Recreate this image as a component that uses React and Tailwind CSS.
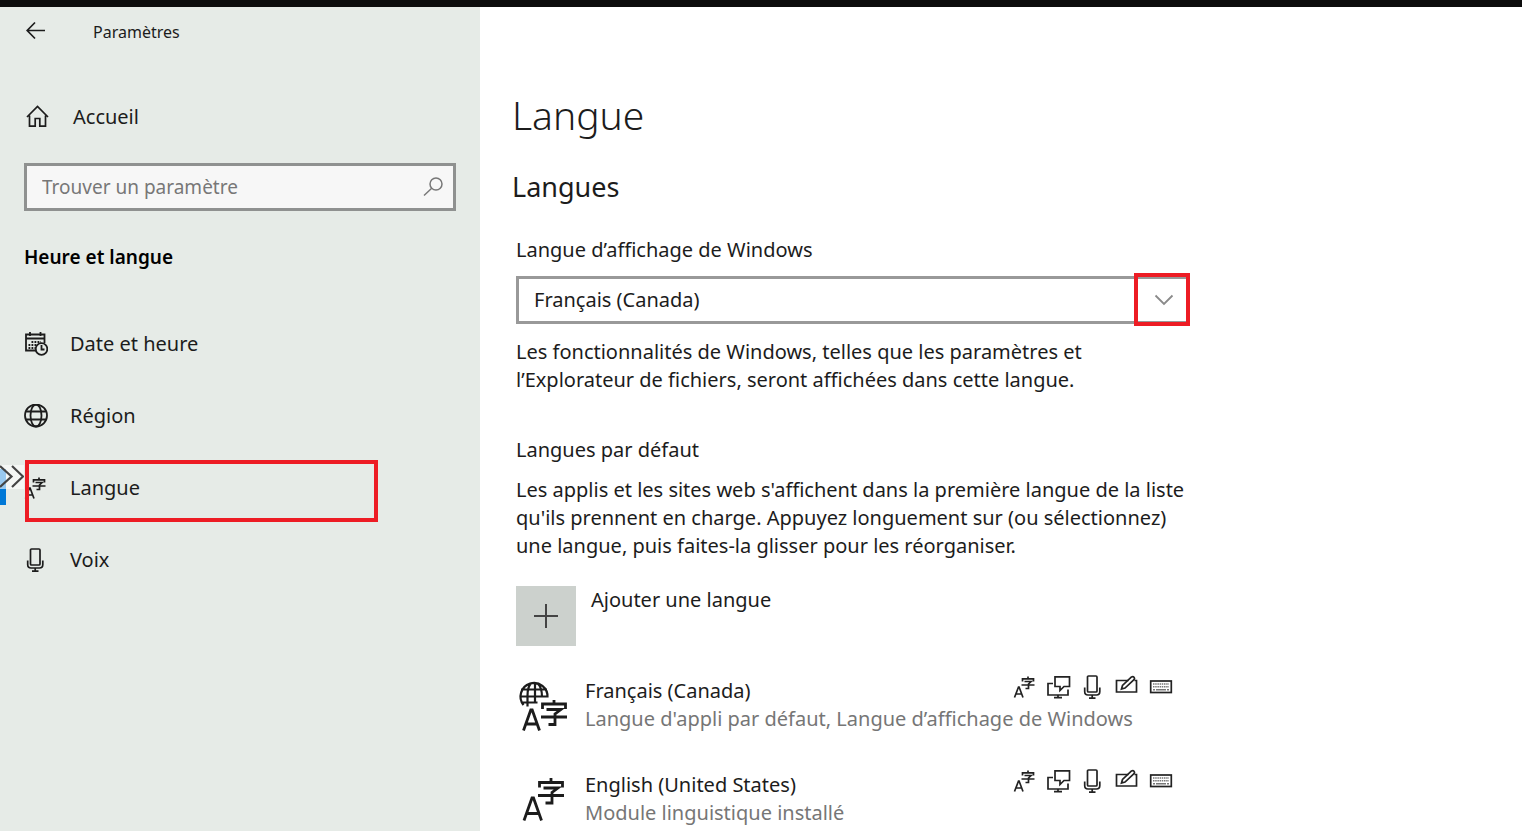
import React from "react";

function Svg({ size = 24, className = "", sw = 1.5, children }) {
  return (
    <svg
      aria-hidden="true"
      width={size}
      height={size}
      viewBox={`0 0 ${size} ${size}`}
      fill="none"
      stroke="currentColor"
      strokeWidth={sw}
      className={`shrink-0 ${className}`}
    >
      {children}
    </svg>
  );
}

const BackIcon = () => (
  <Svg sw={1.7}>
    <path d="M21 10.500H3.500M11 2.500L3.200 10.500l7.800 8" />
  </Svg>
);

const HomeIcon = () => (
  <Svg sw={1.7}>
    <path d="M2 12L12.500 1.500L23 12M4.500 10.500V21.200H10.200V13.500H14.800V21.200H20.500V10.500" />
  </Svg>
);

const SearchIcon = () => (
  <Svg sw={1.5}>
    <circle cx="15" cy="9" r="6" />
    <path d="M10.700 13.300L3 20.500" />
  </Svg>
);

const CalendarIcon = () => (
  <Svg sw={1.8}>
    <path d="M12.500 18.500H2V2.500H20.500V11M2 6.500H20.500M6 0V4M16.500 0V4" />
    <path d="M7.500 10H17M4.500 13H13M4.500 16H12" strokeDasharray="1.800 1.200" />
    <circle cx="17.500" cy="17" r="5.800" />
    <path d="M17.500 13V17.500H20.500" />
  </Svg>
);

const GlobeIcon = () => (
  <Svg sw={1.8}>
    <circle cx="12" cy="11.500" r="11" />
    <ellipse cx="12" cy="11.500" rx="5.500" ry="11" />
    <path d="M2 7.500H22M2 15.500H22" />
  </Svg>
);

const TranslateIcon = () => (
  <Svg sw={1.7}>
    <path d="M1.500 22.500L5.500 12h.6L10 22.500M3 19H8.500" />
    <path d="M9.500 6.500V3.800H20.500V6.500M15 1.500V3.800M11.500 6.500H18L15.500 9V13.500H12.500M8.500 10H21.500" />
  </Svg>
);

const MicIcon = () => (
  <Svg sw={1.7}>
    <rect x="6.500" y="1" width="9.500" height="16" rx="1" />
    <path d="M3.700 12.500V16.500Q3.700 20 7 20H15.500Q18.800 20 18.800 16.500V12.500M11.200 20V23M8 23.200H14.500" />
  </Svg>
);

const DisplayIcon = () => (
  <Svg sw={1.7}>
    <path d="M6 8.500H1V20H21V14.500M11 20V22.500M7 22.700H15" />
    <path d="M8 1.800H22.500V11.500H17L13 15.500V11.500H8Z" />
  </Svg>
);

const PenIcon = () => (
  <Svg sw={1.7}>
    <path d="M13.500 5.500H1.500V17H21.500V5.500H19.500" />
    <path d="M6.500 14L7.500 10.500L16.500 2Q18 1 19 2.200Q20 3.500 19 4.700L10 13Z" />
  </Svg>
);

const KeyboardIcon = () => (
  <Svg sw={1.7}>
    <rect x="1.700" y="6" width="20.600" height="11.500" />
    <g stroke="#777">
      <path d="M4 9H20M4 11.800H20" strokeWidth="1.500" strokeDasharray="1.500 .7" />
      <path d="M4 14.700H6M7 14.700H17M18 14.700H20" strokeWidth="1.600" />
    </g>
  </Svg>
);

const BigTranslateIcon = () => (
  <Svg size={56} sw={2.8}>
    <path d="M8 49.500L16 27h1.500L25.500 49.500M11 42.500H22.500" />
    <path d="M23.500 16.500V11.500H46.500V16.500M35 7V11.500M27.500 17H42L36 21.500V32H29.500M22 24.500H48" />
  </Svg>
);

const GlobeTranslateIcon = () => (
  <Svg size={56} sw={2.8}>
    <path d="M7.500 28A13.500 13.500 0 1 1 31.500 20.500M5 12.500H31M5 19.500H31M6 25.500H21.500M11.500 29.500V19Q11.500 9 15.500 6M19 6V26M26 20Q26 10 21.500 6.500" strokeWidth="2.200" />
    <path d="M7.500 53.500L14.800 33h1.400L23.500 53.500M10.500 47H20.500" />
    <path d="M26.500 32V27H49.500V32M38 23V27M30.500 32.500H45L39 37V47.500H32.500M25 40H51" />
  </Svg>
);

const navItems = [
  { label: "Date et heure", Icon: CalendarIcon },
  { label: "Région", Icon: GlobeIcon },
  { label: "Langue", Icon: TranslateIcon, current: true },
  { label: "Voix", Icon: MicIcon },
];

const languages = [
  {
    name: "Français (Canada)",
    detail: "Langue d'appli par défaut, Langue d’affichage de Windows",
    Icon: GlobeTranslateIcon,
  },
  {
    name: "English (United States)",
    detail: "Module linguistique installé",
    Icon: BigTranslateIcon,
  },
];

function NavItem({ label, Icon, current }) {
  return (
    <li className="relative">
      <a
        href="#"
        aria-current={current ? "page" : undefined}
        className="flex h-[72px] items-center gap-[22px] pl-6"
      >
        <Icon />
        {label}
      </a>
      {current && (
        <>
          <span className="absolute left-0 top-[17px] h-9 w-1.5 bg-[#0078d7]" />
          <span className="absolute left-0 top-[13px] h-6 w-6 bg-white/60">
            <svg aria-hidden="true" width="24" height="24" viewBox="0 0 24 24" fill="none" stroke="#444" strokeWidth="2.200">
              <path d="M0 1L11.500 11.500L0 22M12 1L23 11.500L12 22" />
            </svg>
          </span>
          <span className="absolute left-[25px] top-2 h-[62px] w-[353px] border-4 border-[#ed1c24]" />
        </>
      )}
    </li>
  );
}

function Sidebar() {
  return (
    <aside className="w-[480px] shrink-0 bg-[#e6ebe7]">
      <div className="flex h-[50px] items-center gap-[45px] pl-6">
        <button type="button" aria-label="Retour">
          <BackIcon />
        </button>
        <span className="text-[16px]">Paramètres</span>
      </div>
      <a href="#" className="mt-9 flex h-12 items-center gap-6 pl-[25px]">
        <HomeIcon />
        Accueil
      </a>
      <label className="mx-6 mt-[22px] flex h-12 items-center border-3 border-[#8f9190] bg-[#f7f7f7] pl-[15px] pr-2 text-[19px] text-[#777]">
        <input
          type="text"
          aria-label="Trouver un paramètre"
          placeholder="Trouver un paramètre"
          className="min-w-0 flex-1 bg-transparent outline-none placeholder:text-[#777]"
        />
        <SearchIcon />
      </label>
      <h2 className="mt-8 pl-6 text-[19px] font-semibold text-black">Heure et langue</h2>
      <nav className="mt-[37px]">
        <ul>
          {navItems.map((item) => (
            <NavItem key={item.label} {...item} />
          ))}
        </ul>
      </nav>
    </aside>
  );
}

function LanguageRow({ name, detail, Icon }) {
  return (
    <li className="flex gap-[13px]">
      <span className="h-14">
        <Icon />
      </span>
      <div className="min-w-0 flex-1">
        <div className="flex items-start justify-between pr-4">
          <span>{name}</span>
          <span className="-mt-0.5 flex h-6 gap-2.5 text-[#222]">
            <TranslateIcon />
            <DisplayIcon />
            <MicIcon />
            <PenIcon />
            <KeyboardIcon />
          </span>
        </div>
        <p className="text-[#767676]">{detail}</p>
      </div>
    </li>
  );
}

export default function App() {
  return (
    <div className="flex min-h-screen flex-col bg-white font-['Noto_Sans','Open_Sans',sans-serif] text-[20px] leading-7 text-[#1c1c1c]">
      <div className="h-[7px] bg-[#0c0c0c]" />
      <div className="flex flex-1">
        <Sidebar />
        <main className="min-w-0 flex-1 pl-8 pt-20">
          <h1 className="text-[39px] font-[350] leading-[56px]">Langue</h1>
          <h2 className="mt-[26px] text-[27px] leading-9">Langues</h2>
          <div className="max-w-[677px] pl-1">
            <label htmlFor="display-language" className="mt-[31px] block">
              Langue d’affichage de Windows
            </label>
            <div className="relative mt-3">
              <select
                id="display-language"
                className="block h-12 w-full appearance-none border-3 border-[#999] bg-white pl-[15px] pr-14"
              >
                <option>Français (Canada)</option>
                <option>English (United States)</option>
              </select>
              <span className="pointer-events-none absolute -right-px -top-[3px] flex h-[53px] w-14 items-center justify-center border-4 border-[#ed1c24]">
                <svg aria-hidden="true" width="20" height="12" viewBox="0 0 20 12" fill="none" stroke="#8a8a8a" strokeWidth="1.800" className="ml-1">
                  <path d="M1.500 1.500L10 10L18.500 1.500" />
                </svg>
              </span>
            </div>
            <p className="mt-[14px]">
              Les fonctionnalités de Windows, telles que les paramètres et
              <br />
              l’Explorateur de fichiers, seront affichées dans cette langue.
            </p>
            <h3 className="mt-[42px]">Langues par défaut</h3>
            <p className="mt-3">
              Les applis et les sites web s'affichent dans la première langue de la liste
              <br />
              qu'ils prennent en charge. Appuyez longuement sur (ou sélectionnez)
              <br />
              une langue, puis faites-la glisser pour les réorganiser.
            </p>
            <button type="button" className="mt-[26px] flex items-start gap-[15px] text-left">
              <span className="flex h-[60px] w-[60px] items-center justify-center bg-[#ccd1cd]">
                <Svg sw={2} className="text-[#444]">
                  <path d="M12 0V24M0 12H24" />
                </Svg>
              </span>
              Ajouter une langue
            </button>
            <ul className="mt-[31px] flex flex-col gap-[38px]">
              {languages.map((language) => (
                <LanguageRow key={language.name} {...language} />
              ))}
            </ul>
          </div>
        </main>
      </div>
    </div>
  );
}
